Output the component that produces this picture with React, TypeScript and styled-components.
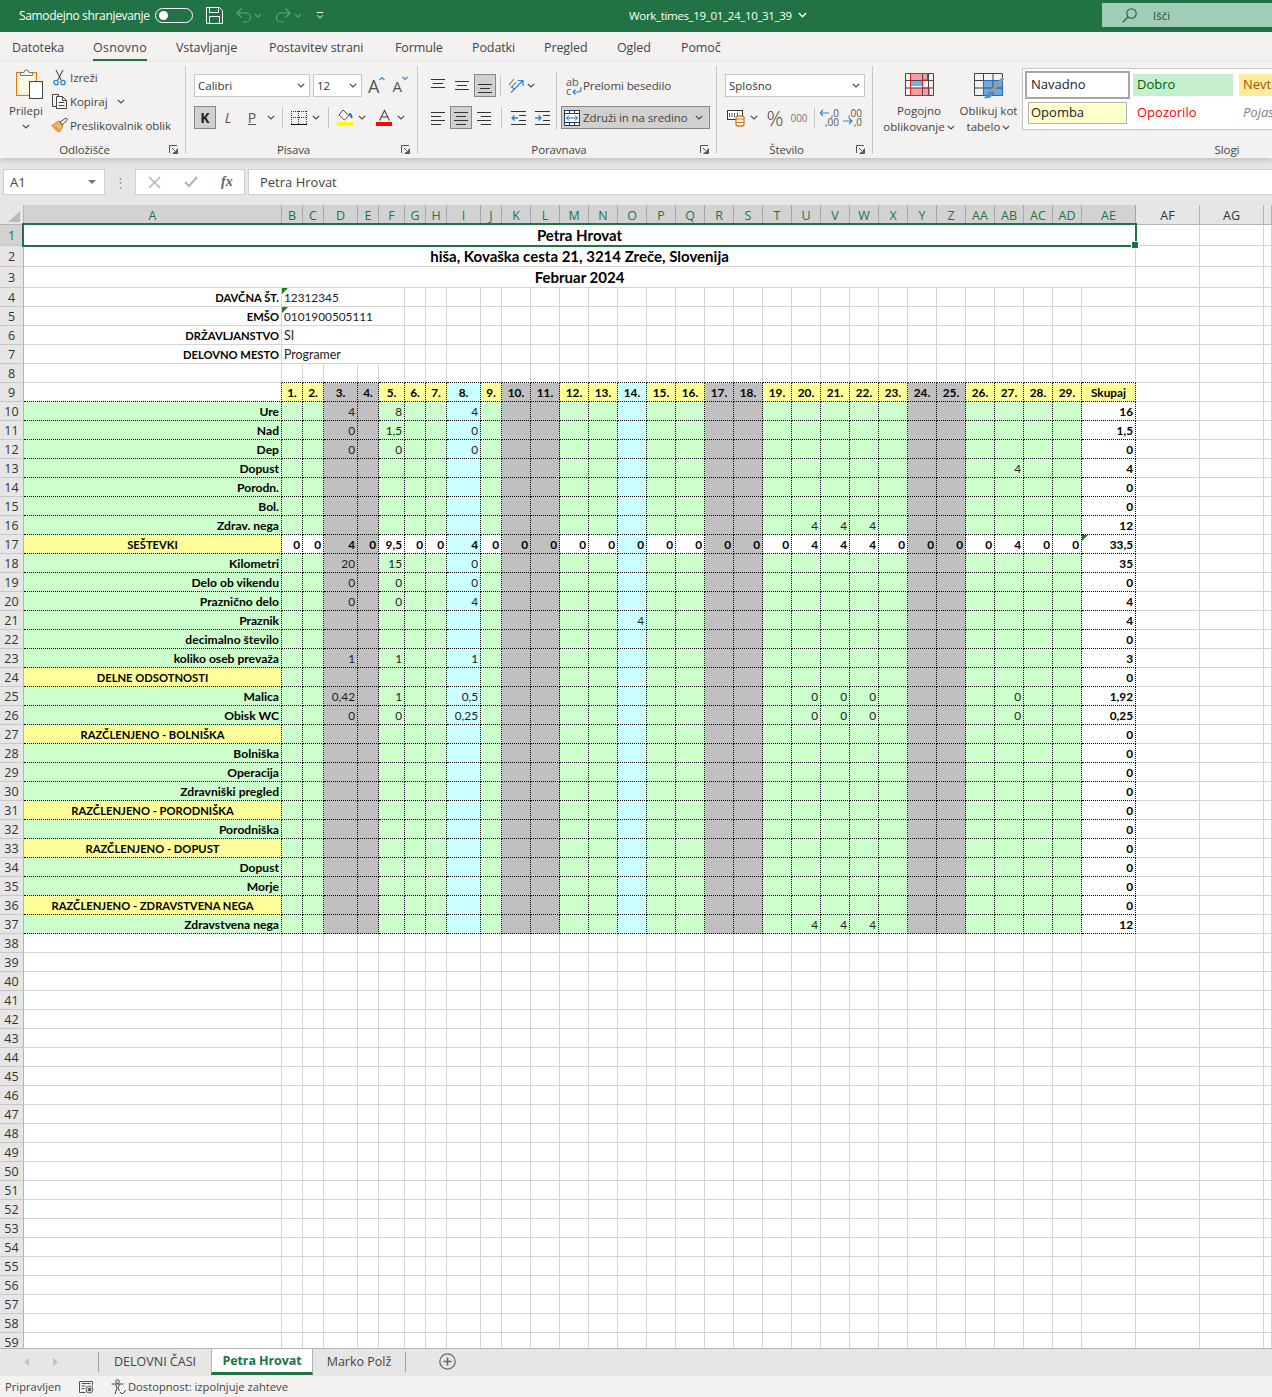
import React from 'react'
import styled, { createGlobalStyle } from 'styled-components'

const UI = `"Open Sans", "Noto Sans", sans-serif`
const SHEET = `"Lato", "Open Sans", sans-serif`
const GREEN = '#217346'
const INK = '#444'

const GlobalStyle = createGlobalStyle`
  html, body { margin: 0; padding: 0; background: #e6e6e6; }
  * { box-sizing: border-box; }
`

/* ---------- data ---------- */

const colNames = [
  'A', 'B', 'C', 'D', 'E', 'F', 'G', 'H', 'I', 'J', 'K', 'L', 'M', 'N', 'O', 'P', 'Q', 'R', 'S', 'T', 'U', 'V', 'W',
  'X', 'Y', 'Z', 'AA', 'AB', 'AC', 'AD', 'AE', 'AF', 'AG', 'AH',
]
const colWidths = [
  258, 21, 21, 34, 21, 26, 21, 21, 34, 21, 29, 29, 29, 29, 29, 29, 29, 29, 29, 29, 29, 29, 29, 29, 29, 29, 29, 29, 29,
  29, 54, 64, 64, 8,
]
const rowHeights = Array.from({ length: 59 }, (_, i) => (i < 3 ? 21 : 19))

const ribbonTabs: [string, number][] = [
  ['Datoteka', 81],
  ['Osnovno', 83],
  ['Vstavljanje', 93],
  ['Postavitev strani', 126],
  ['Formule', 77],
  ['Podatki', 72],
  ['Pregled', 73],
  ['Ogled', 64],
  ['Pomoč', 60],
]

const weekend = [3, 4, 10, 11, 17, 18, 24, 25]
const holiday = [8, 14]
const dayList = Array.from({ length: 29 }, (_, i) => i + 1)

type Row = { label: string; head?: boolean; values?: Record<number, string>; total: string }

const sum: Record<number, string> = {}
dayList.forEach(d => (sum[d] = '0'))
Object.assign(sum, { 3: '4', 5: '9,5', 8: '4', 20: '4', 21: '4', 22: '4', 27: '4' })

const rows: Row[] = [
  { label: 'Ure', values: { 3: '4', 5: '8', 8: '4' }, total: '16' },
  { label: 'Nad', values: { 3: '0', 5: '1,5', 8: '0' }, total: '1,5' },
  { label: 'Dep', values: { 3: '0', 5: '0', 8: '0' }, total: '0' },
  { label: 'Dopust', values: { 27: '4' }, total: '4' },
  { label: 'Porodn.', total: '0' },
  { label: 'Bol.', total: '0' },
  { label: 'Zdrav. nega', values: { 20: '4', 21: '4', 22: '4' }, total: '12' },
  { label: 'SEŠTEVKI', head: true, values: sum, total: '33,5' },
  { label: 'Kilometri', values: { 3: '20', 5: '15', 8: '0' }, total: '35' },
  { label: 'Delo ob vikendu', values: { 3: '0', 5: '0', 8: '0' }, total: '0' },
  { label: 'Praznično delo', values: { 3: '0', 5: '0', 8: '4' }, total: '4' },
  { label: 'Praznik', values: { 14: '4' }, total: '4' },
  { label: 'decimalno število', total: '0' },
  { label: 'koliko oseb prevaža', values: { 3: '1', 5: '1', 8: '1' }, total: '3' },
  { label: 'DELNE ODSOTNOSTI', head: true, total: '0' },
  { label: 'Malica', values: { 3: '0,42', 5: '1', 8: '0,5', 20: '0', 21: '0', 22: '0', 27: '0' }, total: '1,92' },
  { label: 'Obisk WC', values: { 3: '0', 5: '0', 8: '0,25', 20: '0', 21: '0', 22: '0', 27: '0' }, total: '0,25' },
  { label: 'RAZČLENJENO - BOLNIŠKA', head: true, total: '0' },
  { label: 'Bolniška', total: '0' },
  { label: 'Operacija', total: '0' },
  { label: 'Zdravniški pregled', total: '0' },
  { label: 'RAZČLENJENO - PORODNIŠKA', head: true, total: '0' },
  { label: 'Porodniška', total: '0' },
  { label: 'RAZČLENJENO - DOPUST', head: true, total: '0' },
  { label: 'Dopust', total: '0' },
  { label: 'Morje', total: '0' },
  { label: 'RAZČLENJENO - ZDRAVSTVENA NEGA', head: true, total: '0' },
  { label: 'Zdravstvena nega', values: { 20: '4', 21: '4', 22: '4' }, total: '12' },
]

const idRows = [
  { label: 'DAVČNA ŠT.', value: '12312345', flag: true },
  { label: 'EMŠO', value: '0101900505111', flag: true },
  { label: 'DRŽAVLJANSTVO', value: 'SI', flag: false },
  { label: 'DELOVNO MESTO', value: 'Programer', flag: false },
]

const dayFill = (d: number, base: string) => {
  if (weekend.includes(d)) return '#c0c0c0'
  if (holiday.includes(d)) return '#ccffff'
  return base
}

/* ---------- small drawings ---------- */

const Chevron = ({ color = INK }: { color?: string }) => (
  <svg width="8" height="5" viewBox="0 0 8 5" fill="none">
    <path d="M.8.8 4 4 7.2.8" stroke={color} strokeWidth="1.1" />
  </svg>
)

const Launcher = () => (
  <svg width="9" height="9" viewBox="0 0 9 9" fill="none">
    <path d="M.5 8V.5H8M8.5 3.5v5h-5M3 3l4.500 4.500M7.500 4.500v3h-3" stroke="#555" />
  </svg>
)

const PasteIcon = () => (
  <svg width="32" height="32" viewBox="0 0 32 32">
    <rect x="2.5" y="3.5" width="20" height="23" fill="#fbe9c6" stroke="#d9791a" />
    <rect x="4.5" y="5.5" width="16" height="19" fill="#fff6e3" />
    <path d="M6.500 6.500v-3H10a2.500 2.500 0 0 1 5 0h3.500v3z" fill="#f3f2f1" stroke="#777" />
    <rect x="15.5" y="12.5" width="13" height="17" fill="#fff" stroke="#444" />
  </svg>
)

const CutIcon = () => (
  <svg width="13" height="17" viewBox="0 0 13 17" fill="none">
    <path d="M3 1 8.200 11M10 1 4.800 11" stroke="#555" strokeWidth="1.1" />
    <circle cx="3" cy="13.500" r="2.200" stroke="#2b88d8" strokeWidth="1.300" />
    <circle cx="10" cy="13.500" r="2.200" stroke="#2b88d8" strokeWidth="1.300" />
  </svg>
)

const CopyIcon = () => (
  <svg width="18" height="18" viewBox="0 0 18 18" fill="none" stroke="#444">
    <path d="M5.500 14.500h-4v-12h6v2" />
    <path d="M5.500 4.500h6l4 4v8h-10z" fill="#fff" />
    <path d="M11.500 4.500v4h4M7.500 10.500h6M7.500 13.500h6" />
  </svg>
)

const BrushIcon = () => (
  <svg width="18" height="16" viewBox="0 0 18 16">
    <path d="M1 8.500 8 4l4 5-3.500 6C6 14 3 11.500 1 8.500z" fill="#f5b56a" stroke="#d9791a" />
    <path d="M4 9.500 8 13" stroke="#d9791a" />
    <path d="m9 5 6-4 1.500 2L11 8z" fill="#fff" stroke="#444" />
  </svg>
)

const GrowIcon = ({ up }: { up?: boolean }) => (
  <svg width="6" height="5" viewBox="0 0 6 5" fill="none">
    <path d={up ? 'M.5 4 3 1.500 5.500 4' : 'M.5 1 3 3.500 5.500 1'} stroke="#2b88d8" strokeWidth="1.200" />
  </svg>
)

const BorderIcon = () => (
  <svg width="16" height="16" viewBox="0 0 16 16" fill="none" shapeRendering="crispEdges">
    <path d="M0 1.500h16M0 7.500h16M.5 1v13M7.500 1v13M15.500 1v13" stroke="#333" strokeDasharray="1 1" />
    <path d="M0 14.500h16" stroke="#111" strokeWidth="1.500" />
  </svg>
)

const FillIcon = () => (
  <svg width="17" height="17" viewBox="0 0 17 17" fill="none">
    <path d="m6 1 6 5.500-4.500 4.500-5.500-5z" fill="#fff" stroke="#444" />
    <path d="M12 5c2 0 2.500 2 2.500 4" stroke="#106ebe" strokeWidth="2" />
    <rect x="0" y="13" width="16" height="4" fill="#ffff00" />
  </svg>
)

const FontColorIcon = () => (
  <svg width="17" height="17" viewBox="0 0 17 17" fill="none">
    <path d="m3.500 11.500 5-10 5 10M5.300 8h6.400" stroke="#444" strokeWidth="1.100" />
    <rect x="0" y="13" width="16" height="4" fill="#ff0000" />
  </svg>
)

const Lines = ({ set, w = 15, h = 16 }: { set: [number, number, number][]; w?: number; h?: number }) => (
  <svg width={w} height={h} viewBox={`0 0 ${w} ${h}`} fill="none" stroke="#333">
    {set.map(([a, b, y]) => (
      <path key={`${a}-${y}`} d={`M${a} ${y}.5H${b}`} />
    ))}
  </svg>
)

const OrientIcon = () => (
  <svg width="17" height="17" viewBox="0 0 17 17" fill="none">
    <path d="M2 8 7 2M5 10l4-5M3.500 9.500l4 2.500" stroke="#555" />
    <path d="M4 15.500 15.500 4M10.500 3.500H16V9" stroke="#2b88d8" strokeWidth="1.200" />
  </svg>
)

const IndentIcon = ({ flip }: { flip?: boolean }) => (
  <svg width="15" height="14" viewBox="0 0 15 14" fill="none">
    <path d="M0 .5h15M0 13.500h15M8 4.500h7M8 9.500h7" stroke="#333" />
    <path
      d={flip ? 'M0 7h6M3.500 4.500 6 7 3.500 9.500' : 'M7 7H1M3.500 4.500 1 7l2.500 2.500'}
      stroke="#2b88d8"
      strokeWidth="1.300"
    />
  </svg>
)

const WrapArrow = () => (
  <svg width="17" height="20" viewBox="0 0 17 20" fill="none">
    <path d="M15 11v2a3 3 0 0 1-3 3H7M9.500 13.500 7 16l2.500 2.500" stroke="#2b88d8" strokeWidth="1.200" />
  </svg>
)

const MergeIcon = () => (
  <svg width="16" height="16" viewBox="0 0 16 16" fill="none">
    <rect x=".5" y=".5" width="15" height="15" fill="#fff" stroke="#1f3a5f" />
    <path d="M.5 3.500h15M.5 12.500h15M5.500.5v3M10.500.5v3M5.500 12.500v3M10.500 12.500v3" stroke="#1f3a5f" />
    <path d="M2.500 8h11M5 5.500 2.500 8 5 10.500M11 5.500 13.500 8 11 10.500" stroke="#106ebe" />
  </svg>
)

const AccountIcon = () => (
  <svg width="20" height="18" viewBox="0 0 20 18" fill="none">
    <rect x=".5" y="1.500" width="15" height="9" fill="#fff" stroke="#333" />
    <path d="M2.500 4v4M5 4v4M7.500 4v4M10.500 4v4" stroke="#555" />
    <rect x="9" y="7" width="8" height="10" rx="2" fill="#fff" stroke="#d9791a" strokeWidth="1.300" />
    <path d="M9 10h8M9 13.500h8" stroke="#d9791a" />
  </svg>
)

const DecimalArrow = ({ more }: { more?: boolean }) => (
  <svg width="18" height="16" viewBox="0 0 18 16" fill="none">
    <path d={more ? 'M0 4h9M3 1 0 4l3 3' : 'M0 12h9M6 9l3 3-3 3'} stroke="#2b88d8" strokeWidth="1.200" />
  </svg>
)

const CondIcon = () => (
  <svg width="29" height="23" viewBox="0 0 29 23" fill="none">
    <rect x="5" y="1" width="17" height="6" fill="#ff9aa2" />
    <rect x="5" y="7" width="12" height="6" fill="#6fb0e6" />
    <rect x="5" y="15" width="19" height="7" fill="#ff9aa2" />
    <path d="M.5.5h28v22H.5zM.5 7.500h28M.5 15h28M5.500.5v22M17.500.5v22M23.500.5v22" stroke="#444" />
    <path d="M5.500.5h17V7h-5v8H24v7.500H5.500z" stroke="#e02020" />
  </svg>
)

const TableIcon = () => (
  <svg width="30" height="28" viewBox="0 0 30 28" fill="none">
    <rect x="10" y="8" width="18" height="14" fill="#6fa8dc" />
    <path d="M.5.5h28v22H.5zM.5 7.500h28M.5 15h28M9.500.5v22M19 .5v22" stroke="#444" />
    <path d="M9.500 7.500h19v15h-19z" stroke="#1a6fc0" />
    <path d="M29 5 17 19" stroke="#999" strokeWidth="3" />
    <path d="M16 18c-3 1-2 5-7 7 5 1 9 0 10-5z" fill="#4a90d0" />
  </svg>
)

const SaveIcon = () => (
  <svg width="17" height="17" viewBox="0 0 17 17" fill="none" stroke="#fff">
    <path d="M.5.5h13l3 3v13H.5z" />
    <path d="M3.500.5v5h9v-5M3.500 16.500v-7h10v7" />
  </svg>
)

const UndoIcon = ({ flip }: { flip?: boolean }) => (
  <svg width="16" height="16" viewBox="0 0 16 16" fill="none" style={flip ? { transform: 'scaleX(-1)' } : undefined}>
    <path d="M1 6h9a4.500 4.500 0 0 1 0 9H7M5.500 1.500 1 6l4.500 4.500" stroke="#5fa37f" strokeWidth="1.200" />
  </svg>
)

const SearchIcon = () => (
  <svg width="15" height="15" viewBox="0 0 15 15" fill="none" stroke="#1f5c3d" strokeWidth="1.100">
    <circle cx="9.500" cy="5.500" r="4.700" />
    <path d="M6 9 .7 14.300" />
  </svg>
)

const MoreIcon = () => (
  <svg width="8" height="8" viewBox="0 0 8 8" fill="none" stroke="#fff">
    <path d="M1 1.500h6M1.200 4.300 4 7l2.800-2.700" />
  </svg>
)

const AccessIcon = () => (
  <svg width="16" height="16" viewBox="0 0 16 16" fill="none" stroke="#444">
    <circle cx="6.500" cy="2.500" r="1.800" />
    <path d="M.5 5h12M4.500 5.500 6 9l-2 6M8.500 5.500 7 9l1.500 3M9 13l2 2 4-4" />
  </svg>
)

const PageIcon = () => (
  <svg width="15" height="14" viewBox="0 0 15 14" fill="none" stroke="#555">
    <path d="M.5 1.500h13v4M.5 1.500v11h6M2.500 3.500h9M2.500 6h4M2.500 8.500h3" />
    <circle cx="10.500" cy="9.500" r="3.500" />
    <circle cx="10.500" cy="9.500" r="1.500" fill="#555" />
  </svg>
)

/* ---------- page ---------- */

const App = () => (
  <>
    <GlobalStyle />
    <Window>
      <TitleBar>
        <TitleLeft>
          <AutosaveText>Samodejno shranjevanje</AutosaveText>
          <Toggle />
          <TitleSlot $l={13}>
            <SaveIcon />
          </TitleSlot>
          <TitleSlot $l={13}>
            <UndoIcon />
          </TitleSlot>
          <TitleSlot $l={2}>
            <Chevron color="#5fa37f" />
          </TitleSlot>
          <TitleSlot $l={13}>
            <UndoIcon flip />
          </TitleSlot>
          <TitleSlot $l={3}>
            <Chevron color="#5fa37f" />
          </TitleSlot>
          <TitleSlot $l={14}>
            <MoreIcon />
          </TitleSlot>
        </TitleLeft>
        <DocTitle>
          Work_times_19_01_24_10_31_39
          <svg viewBox="0 0 8 5" width="9" height="6">
            <path d="M.8.8 4 4 7.200.8" fill="none" stroke="#fff" strokeWidth="1.300" />
          </svg>
        </DocTitle>
        <SearchBox>
          <SearchIcon />
          <span>Išči</span>
        </SearchBox>
      </TitleBar>

      <TabRow>
        {ribbonTabs.map(([tab, w]) => (
          <TabSlot key={tab} $w={w}>
            <RibbonTab $active={tab === 'Osnovno'}>{tab}</RibbonTab>
          </TabSlot>
        ))}
      </TabRow>

      <Ribbon>
        <Group $w={186}>
          <GroupBody>
            <PasteButton>
              <PasteGlyph>
                <PasteIcon />
              </PasteGlyph>
              <PasteLabel>Prilepi</PasteLabel>
              <Chevron />
            </PasteButton>
            <ClipColumn>
              <ClipItem>
                <ClipSlot $pad={2}>
                  <CutIcon />
                </ClipSlot>
                Izreži
              </ClipItem>
              <ClipItem>
                <ClipSlot $pad={0}>
                  <CopyIcon />
                </ClipSlot>
                Kopiraj
                <ChevronGap>
                  <Chevron />
                </ChevronGap>
              </ClipItem>
              <ClipItem>
                <ClipSlot $pad={0}>
                  <BrushIcon />
                </ClipSlot>
                Preslikovalnik oblik
              </ClipItem>
            </ClipColumn>
          </GroupBody>
          <GroupLabel>
            <LabelText>Odložišče</LabelText>
            <LauncherSlot>
              <Launcher />
            </LauncherSlot>
          </GroupLabel>
        </Group>

        <Group $w={232}>
          <Stack $left={8}>
            <ToolRow>
              <Select $w={116}>
                Calibri
                <Chevron />
              </Select>
              <Spacer $w={3} />
              <Select $w={49}>
                12
                <Chevron />
              </Select>
              <Spacer $w={6} />
              <GrowButton $size={18}>
                A
                <GrowIcon up />
              </GrowButton>
              <Spacer $w={7} />
              <GrowButton $size={15}>
                A
                <GrowIcon />
              </GrowButton>
            </ToolRow>
            <ToolRow>
              <ToolButton $w={22} $on>
                <BoldK>K</BoldK>
              </ToolButton>
              <ToolButton $w={24}>
                <ItalicL>L</ItalicL>
              </ToolButton>
              <ToolButton $w={24}>
                <UnderP>P</UnderP>
              </ToolButton>
              <ToolButton $w={13}>
                <Chevron />
              </ToolButton>
              <VBar $m={5} />
              <ToolButton $w={21}>
                <BorderIcon />
              </ToolButton>
              <ToolButton $w={13}>
                <Chevron />
              </ToolButton>
              <VBar $m={6} />
              <ToolButton $w={20}>
                <FillIcon />
              </ToolButton>
              <ToolButton $w={13}>
                <Chevron />
              </ToolButton>
              <Spacer $w={3} />
              <ToolButton $w={26}>
                <FontColorIcon />
              </ToolButton>
              <ToolButton $w={8}>
                <Chevron />
              </ToolButton>
            </ToolRow>
          </Stack>
          <GroupLabel>
            <LabelText>Pisava</LabelText>
            <LauncherSlot>
              <Launcher />
            </LauncherSlot>
          </GroupLabel>
        </Group>

        <Group $w={299}>
          <GroupBody>
            <Stack $left={8}>
              <ToolRow>
                <ToolButton $w={24}>
                  <Lines set={[[0, 14, 1], [2, 12, 5], [0, 14, 9]]} />
                </ToolButton>
                <ToolButton $w={24}>
                  <Lines set={[[0, 14, 3], [2, 12, 7], [0, 14, 11]]} />
                </ToolButton>
                <ToolButton $w={22} $on>
                  <Lines set={[[0, 14, 6], [2, 12, 10], [0, 14, 14]]} />
                </ToolButton>
                <VBar $m={4} />
                <ToolButton $w={20}>
                  <OrientIcon />
                </ToolButton>
                <ToolButton $w={12}>
                  <Chevron />
                </ToolButton>
              </ToolRow>
              <ToolRow>
                <ToolButton $w={24}>
                  <Lines set={[[0, 14, 2], [0, 10, 6], [0, 14, 10], [0, 10, 14]]} />
                </ToolButton>
                <ToolButton $w={22} $on>
                  <Lines set={[[0, 14, 2], [2, 12, 6], [0, 14, 10], [2, 12, 14]]} />
                </ToolButton>
                <ToolButton $w={25}>
                  <Lines set={[[0, 14, 2], [4, 14, 6], [0, 14, 10], [4, 14, 14]]} />
                </ToolButton>
                <VBar $m={4} />
                <ToolButton $w={24}>
                  <IndentIcon />
                </ToolButton>
                <ToolButton $w={24}>
                  <IndentIcon flip />
                </ToolButton>
              </ToolRow>
            </Stack>
            <WrapColumn>
              <WrapItem>
                <WrapGlyph>
                  <WrapLetters>
                    ab
                    <br />c
                  </WrapLetters>
                  <WrapArrow />
                </WrapGlyph>
                <span>Prelomi besedilo</span>
              </WrapItem>
              <MergeButton>
                <MergeIcon />
                <MergeText>Združi in na sredino</MergeText>
                <Chevron />
              </MergeButton>
            </WrapColumn>
          </GroupBody>
          <GroupLabel>
            <LabelText>Poravnava</LabelText>
            <LauncherSlot>
              <Launcher />
            </LauncherSlot>
          </GroupLabel>
        </Group>

        <Group $w={156}>
          <Stack $left={8}>
            <ToolRow>
              <Select $w={140}>
                Splošno
                <Chevron />
              </Select>
            </ToolRow>
            <ToolRow>
              <ToolButton $w={24}>
                <AccountIcon />
              </ToolButton>
              <ToolButton $w={10}>
                <Chevron />
              </ToolButton>
              <Spacer $w={3} />
              <ToolButton $w={26}>
                <Percent>%</Percent>
              </ToolButton>
              <ToolButton $w={22}>
                <Thousands>000</Thousands>
              </ToolButton>
              <VBar $m={4} />
              <DecimalButton>
                <DecimalArrow more />
                <DecimalDigits $pos="top">,0</DecimalDigits>
                <DecimalDigits $pos="bottom">,00</DecimalDigits>
              </DecimalButton>
              <DecimalButton>
                <DecimalArrow />
                <DecimalDigits $pos="top">,00</DecimalDigits>
                <DecimalDigits $pos="bottom">,0</DecimalDigits>
              </DecimalButton>
            </ToolRow>
          </Stack>
          <GroupLabel>
            <LabelText>Število</LabelText>
            <LauncherSlot>
              <Launcher />
            </LauncherSlot>
          </GroupLabel>
        </Group>

        <Group $w={724} $last>
          <GroupBody>
            <BigButton $w={72} $ml={10}>
              <BigIconSlot>
                <CondIcon />
              </BigIconSlot>
              <span>Pogojno</span>
              <BigLine>
                oblikovanje
                <Chevron />
              </BigLine>
            </BigButton>
            <BigButton $w={67} $ml={0}>
              <BigIconSlot>
                <TableIcon />
              </BigIconSlot>
              <span>Oblikuj kot</span>
              <BigLine>
                tabelo
                <Chevron />
              </BigLine>
            </BigButton>
            <Gallery>
              <NormalChip>Navadno</NormalChip>
              <StyleChip $bg="#c6efce" $fg="#006100">
                Dobro
              </StyleChip>
              <StyleChip $bg="#ffeb9c" $fg="#9c5700">
                Nevtralno
              </StyleChip>
              <NoteChip>Opomba</NoteChip>
              <StyleChip $bg="#fff" $fg="#ff0000">
                Opozorilo
              </StyleChip>
              <StyleChip $bg="#fff" $fg="#7f7f7f" $italic>
                Pojasnilo
              </StyleChip>
            </Gallery>
          </GroupBody>
          <GroupLabel>
            <LabelText>Slogi</LabelText>
            <LauncherSlot />
          </GroupLabel>
        </Group>
      </Ribbon>

      <FormulaBar>
        <NameBox>
          A1
          <Caret />
        </NameBox>
        <GripDots>⋮</GripDots>
        <FormulaButtons>
          <svg width="13" height="13" viewBox="0 0 13 13" fill="none" stroke="#b4b4b4" strokeWidth="1.500">
            <path d="m1 1 11 11M12 1 1 12" />
          </svg>
          <svg width="14" height="12" viewBox="0 0 14 12" fill="none" stroke="#b4b4b4" strokeWidth="2">
            <path d="m1 6 4 4 8-9" />
          </svg>
          <FxText>fx</FxText>
        </FormulaButtons>
        <FormulaInput>Petra Hrovat</FormulaInput>
      </FormulaBar>

      <Sheet>
        <Corner>
          <svg width="12" height="11" viewBox="0 0 12 11">
            <path d="M12 0v11H0z" fill="#b9b9b9" />
          </svg>
        </Corner>
        {colNames.map((name, i) => (
          <ColHead key={name} $selected={i < 31}>
            {i < 33 ? name : ''}
          </ColHead>
        ))}

        {rowHeights.map((_, r) => {
          const n = r + 1
          return (
            <React.Fragment key={n}>
              <RowHead $selected={n === 1}>{n}</RowHead>
              {renderRow(n)}
            </React.Fragment>
          )
        })}
      </Sheet>

      <SheetTabs>
        <NavArrows>
          <svg width="6" height="8" viewBox="0 0 6 8">
            <path d="M5 0v8L0 4z" fill="#c0c0c0" />
          </svg>
          <svg width="6" height="8" viewBox="0 0 6 8">
            <path d="M1 0v8l5-4z" fill="#c0c0c0" />
          </svg>
        </NavArrows>
        <TabDivider />
        <SheetTab $w={112}>DELOVNI ČASI</SheetTab>
        <ActiveSheetTab>Petra Hrovat</ActiveSheetTab>
        <SheetTab $w={92}>Marko Polž</SheetTab>
        <TabDivider />
        <AddSheet>
          <svg width="17" height="17" viewBox="0 0 17 17" fill="none" stroke="#666">
            <circle cx="8.500" cy="8.500" r="7.700" strokeWidth="1.200" />
            <path d="M8.500 4.500v8M4.500 8.500h8" strokeWidth="1.500" />
          </svg>
        </AddSheet>
      </SheetTabs>

      <StatusBar>
        <StatusText>Pripravljen</StatusText>
        <PageIcon />
        <AccessSlot>
          <AccessIcon />
        </AccessSlot>
        <AccessText>Dostopnost: izpolnjuje zahteve</AccessText>
      </StatusBar>
    </Window>
  </>
)

function renderRow(n: number) {
  const blanks = (count: number) => Array.from({ length: count }, (_, i) => <Cell key={`blank${i}`} />)

  if (n <= 3) {
    const text = ['Petra Hrovat', 'hiša, Kovaška cesta 21, 3214 Zreče, Slovenija', 'Februar 2024'][n - 1]
    return (
      <>
        <Cell $span={31} $align="center" $bold $size={15}>
          {text}
          {n === 1 && (
            <Selection>
              <Handle />
            </Selection>
          )}
        </Cell>
        {blanks(3)}
      </>
    )
  }
  if (n <= 7) {
    const item = idRows[n - 4]
    return (
      <>
        <Cell $align="right" $bold $size={11.2}>
          {item.label}
        </Cell>
        <Cell $span={5} $align="left" $size={/\d/.test(item.value) ? undefined : 12.4}>
          {item.flag && <Flag />}
          {item.value}
        </Cell>
        {blanks(28)}
      </>
    )
  }
  if (n === 8) {
    return (
      <>
        <Cell />
        {dayList.map(d => (
          <Cell key={d} $dotBottom />
        ))}
        <Cell $dotBottom />
        {blanks(3)}
      </>
    )
  }
  if (n === 9) {
    return (
      <>
        <Cell $dotted />
        {dayList.map(d => (
          <Cell key={d} $dotted $fill={dayFill(d, '#ffff99')} $align="center" $bold>
            {d}.
          </Cell>
        ))}
        <Cell $dotted $fill="#ffff99" $align="center" $bold>
          Skupaj
        </Cell>
        {blanks(3)}
      </>
    )
  }
  if (n <= 37) {
    const row = rows[n - 10]
    const isSum = row.label === 'SEŠTEVKI'
    return (
      <>
        <Cell
          $dotted
          $fill={row.head ? '#ffff99' : '#ccffcc'}
          $align={row.head ? 'center' : 'right'}
          $bold
          $size={row.head ? 11.2 : 12.1}
        >
          {row.label}
        </Cell>
        {dayList.map(d => (
          <Cell key={d} $dotted $fill={dayFill(d, isSum ? '#ffffff' : '#ccffcc')} $align="right" $bold={isSum}>
            {row.values?.[d]}
          </Cell>
        ))}
        <Cell $dotted $fill="#ffffff" $align="right" $bold>
          {isSum && <Flag />}
          {row.total}
        </Cell>
        {blanks(3)}
      </>
    )
  }
  return blanks(34)
}

const Window = styled.div`
  width: 1272px;
  height: 1397px;
  overflow: hidden;
  display: flex;
  flex-direction: column;
  font-family: ${UI};
  background: #e6e6e6;
`

const TitleBar = styled.header`
  height: 32px;
  flex: none;
  padding-bottom: 2px;
  background: ${GREEN};
  color: #fff;
  display: flex;
  align-items: center;
  font-size: 12px;
`

const TitleLeft = styled.div`
  width: 629px;
  flex: none;
  padding-left: 19px;
  display: flex;
  align-items: center;
`

const AutosaveText = styled.span`
  width: 136px;
  flex: none;
  white-space: nowrap;
  letter-spacing: -0.33px;
`

const Toggle = styled.span`
  position: relative;
  width: 38px;
  height: 15px;
  flex: none;
  border: 1px solid #fff;
  border-radius: 8px;

  &::after {
    content: '';
    position: absolute;
    left: 3px;
    top: 2px;
    width: 9px;
    height: 9px;
    border-radius: 50%;
    background: #fff;
  }
`

const TitleSlot = styled.span<{ $l: number }>`
  display: flex;
  flex: none;
  margin-left: ${({ $l }) => $l}px;
`

const DocTitle = styled.div`
  width: 473px;
  flex: none;
  display: flex;
  align-items: center;
  gap: 6px;
  white-space: nowrap;
  font-size: 11.5px;
  letter-spacing: -0.33px;
`

const SearchBox = styled.div`
  width: 170px;
  height: 24px;
  flex: none;
  background: #a0cdb5;
  color: #1f4f37;
  display: flex;
  align-items: center;
  gap: 16px;
  padding-left: 20px;
  font-size: 11.5px;
`

const TabRow = styled.nav`
  height: 30px;
  flex: none;
  background: #f3f2f1;
  display: flex;
  padding: 3px 0 0 12px;
  font-size: 12.5px;
  color: ${INK};
`

const TabSlot = styled.div<{ $w: number }>`
  width: ${({ $w }) => $w}px;
  flex: none;
`

const RibbonTab = styled.span<{ $active?: boolean }>`
  display: inline-flex;
  height: 26px;
  align-items: center;
  white-space: nowrap;
  letter-spacing: ${({ $active }) => ($active ? '0.25px' : '-0.1px')};
  font-weight: ${({ $active }) => ($active ? 500 : 400)};
  border-bottom: 2px solid ${({ $active }) => ($active ? GREEN : 'transparent')};
`

const Ribbon = styled.section`
  height: 96px;
  flex: none;
  background: #f3f2f1;
  display: flex;
  overflow: hidden;
  box-shadow: 0 2px 6px rgba(0, 0, 0, 0.18);
  position: relative;
  z-index: 1;
  font-size: 11.5px;
  color: ${INK};
`

const Group = styled.div<{ $w: number; $last?: boolean }>`
  width: ${({ $w }) => $w}px;
  flex: none;
  height: 88px;
  margin-top: 4px;
  padding-top: 8px;
  display: flex;
  flex-direction: column;
  border-right: ${({ $last }) => ($last ? 'none' : '1px solid #c8c6c4')};
`

const GroupBody = styled.div`
  display: flex;
  min-height: 0;
`

const GroupLabel = styled.div`
  height: 14px;
  margin-top: auto;
  margin-bottom: -2px;
  flex: none;
  display: flex;
  align-items: center;
`

const LabelText = styled.span`
  flex: 1;
  text-align: center;
  letter-spacing: -0.1px;
`

const LauncherSlot = styled.span`
  width: 16px;
  flex: none;
  display: flex;
`

const PasteButton = styled.div`
  width: 52px;
  flex: none;
  margin-top: -5px;
  display: flex;
  flex-direction: column;
  align-items: center;
`

const PasteGlyph = styled.span`
  display: flex;
  margin-left: 8px;
`

const PasteLabel = styled.span`
  line-height: 16px;
  margin: 2px 0 5px;
  font-size: 11.5px;
`

const ClipColumn = styled.div`
  margin: -9px 0 0 -1px;
  display: flex;
  flex-direction: column;
`

const ClipItem = styled.div`
  height: 24px;
  display: flex;
  align-items: center;
  white-space: nowrap;
  letter-spacing: -0.06px;
`

const ClipSlot = styled.span<{ $pad: number }>`
  width: 19px;
  flex: none;
  padding-left: ${({ $pad }) => $pad}px;
  display: flex;
`

const ChevronGap = styled.span`
  display: flex;
  margin-left: 10px;
`

const Stack = styled.div<{ $left: number }>`
  padding-left: ${({ $left }) => $left}px;
  display: flex;
  flex-direction: column;
  gap: 9px;
  flex: none;
`

const ToolRow = styled.div`
  height: 23px;
  display: flex;
  align-items: center;
`

const Spacer = styled.span<{ $w: number }>`
  width: ${({ $w }) => $w}px;
  flex: none;
`

const Select = styled.div<{ $w: number }>`
  width: ${({ $w }) => $w}px;
  height: 23px;
  flex: none;
  background: #fff;
  border: 1px solid #c8c6c4;
  display: flex;
  align-items: center;
  justify-content: space-between;
  padding: 0 4px 0 3px;
  color: #333;
  font-size: 11.5px;
`

const GrowButton = styled.div<{ $size: number }>`
  display: flex;
  align-items: flex-start;
  font-size: ${({ $size }) => $size}px;
  line-height: 20px;
  height: 20px;
  color: #555;
`

const ToolButton = styled.div<{ $w: number; $on?: boolean }>`
  width: ${({ $w }) => $w}px;
  height: 23px;
  flex: none;
  display: flex;
  align-items: center;
  justify-content: center;
  background: ${({ $on }) => ($on ? '#d2d0ce' : 'transparent')};
  border: ${({ $on }) => ($on ? '1px solid #8a8886' : 'none')};
`

const BoldK = styled.span`
  font-weight: 700;
  font-size: 14px;
  color: #222;
`

const ItalicL = styled.span`
  font-style: italic;
  font-size: 14px;
  color: #555;
`

const UnderP = styled.span`
  font-size: 14px;
  color: #555;
  text-decoration: underline;
`

const VBar = styled.span<{ $m: number }>`
  width: 1px;
  height: 21px;
  flex: none;
  margin: 0 ${({ $m }) => $m}px;
  background: #c8c6c4;
`

const WrapColumn = styled.div`
  margin-left: 2px;
  padding: 2px 0 0 4px;
  height: 58px;
  margin-top: -2px;
  border-left: 1px solid #c8c6c4;
  display: flex;
  flex-direction: column;
  gap: 9px;
`

const WrapItem = styled.div`
  height: 23px;
  display: flex;
  align-items: center;
  white-space: nowrap;
  padding-left: 5px;
  letter-spacing: -0.1px;
`

const WrapGlyph = styled.span`
  position: relative;
  width: 17px;
  height: 20px;
  flex: none;
  display: block;

  svg {
    position: absolute;
    left: 0;
    top: 0;
  }
`

const WrapLetters = styled.span`
  position: absolute;
  left: 0;
  top: 1px;
  font-size: 11px;
  line-height: 9px;
  color: #555;
`

const MergeButton = styled.div`
  width: 149px;
  height: 23px;
  background: #d2d0ce;
  border: 1px solid #8a8886;
  display: flex;
  align-items: center;
  padding: 0 6px 0 2px;
  white-space: nowrap;
`

const MergeText = styled.span`
  flex: 1;
  margin-left: 3px;
  letter-spacing: -0.1px;
`

const Percent = styled.span`
  font-size: 21px;
  font-weight: 300;
  color: #444;
`

const Thousands = styled.span`
  font-size: 10px;
  color: #777;
`

const DecimalButton = styled.div`
  position: relative;
  width: 23px;
  height: 23px;
  flex: none;

  svg {
    position: absolute;
    left: 1px;
    top: 3px;
  }
`

const DecimalDigits = styled.span<{ $pos: 'top' | 'bottom' }>`
  position: absolute;
  right: 3px;
  top: ${({ $pos }) => ($pos === 'top' ? 2 : 11)}px;
  font-size: 10px;
  line-height: 10px;
  color: #555;
`

const BigButton = styled.div<{ $w: number; $ml: number }>`
  width: ${({ $w }) => $w}px;
  margin-left: ${({ $ml }) => $ml}px;
  flex: none;
  margin-top: -1px;
  display: flex;
  flex-direction: column;
  align-items: center;
  line-height: 16px;
  white-space: nowrap;
`

const BigIconSlot = styled.span`
  height: 30px;
  display: flex;
`

const BigLine = styled.span`
  display: flex;
  align-items: center;
  gap: 2px;
`

const Gallery = styled.div`
  width: 251px;
  height: 62px;
  flex: none;
  margin-top: -6px;
  padding: 2px 0 0 2px;
  background: #fff;
  border: 1px solid #c8c6c4;
  display: grid;
  grid-template-columns: 105px 106px 106px;
  grid-auto-rows: 28px;
  font-size: 13px;
  overflow: hidden;
`

const NormalChip = styled.div`
  border: 2px solid #a6a6a6;
  padding: 0 0 2px 4px;
  display: flex;
  align-items: center;
  color: #222;
`

const StyleChip = styled.div<{ $bg: string; $fg: string; $italic?: boolean }>`
  margin: 3px;
  padding: 0 0 2px 4px;
  display: flex;
  align-items: center;
  background: ${({ $bg }) => $bg};
  color: ${({ $fg }) => $fg};
  font-style: ${({ $italic }) => ($italic ? 'italic' : 'normal')};
`

const NoteChip = styled.div`
  margin: 3px;
  padding: 0 0 2px 2px;
  display: flex;
  align-items: center;
  background: #ffffcc;
  border: 1px solid #b2b2b2;
  color: #222;
`

const FormulaBar = styled.div`
  height: 47px;
  flex: none;
  padding: 11px 0 10px 3px;
  display: flex;
  font-size: 13px;
  color: ${INK};
`

const NameBox = styled.div`
  width: 102px;
  background: #fff;
  border: 1px solid #d0d0d0;
  display: flex;
  align-items: center;
  justify-content: space-between;
  padding: 0 8px 0 6px;
`

const Caret = styled.span`
  width: 0;
  height: 0;
  border-left: 4px solid transparent;
  border-right: 4px solid transparent;
  border-top: 4px solid #777;
`

const GripDots = styled.span`
  width: 30px;
  text-align: center;
  line-height: 26px;
  color: #999;
`

const FormulaButtons = styled.div`
  width: 110px;
  background: #fff;
  border: 1px solid #d0d0d0;
  display: flex;
  align-items: center;
  padding-left: 12px;
  gap: 23px;
`

const FxText = styled.span`
  font-family: 'Liberation Serif', serif;
  font-style: italic;
  font-weight: 700;
  font-size: 14px;
  color: #666;
`

const FormulaInput = styled.div`
  margin-left: 3px;
  flex: 1;
  background: #fff;
  border: 1px solid #d0d0d0;
  border-right: none;
  display: flex;
  align-items: center;
  padding-left: 11px;
`

const Sheet = styled.main`
  height: 1143px;
  flex: none;
  overflow: hidden;
  display: grid;
  grid-template-columns: 24px ${colWidths.map(w => `${w}px`).join(' ')};
  grid-template-rows: 20px ${rowHeights.map(h => `${h}px`).join(' ')};
  background: #fff;
  font-family: ${SHEET};
  font-size: 11.8px;
  color: #222;
`

const Corner = styled.div`
  background: #e6e6e6;
  border-right: 1px solid #b4b4b4;
  border-bottom: 1px solid #b4b4b4;
  display: flex;
  align-items: flex-end;
  justify-content: flex-end;
  padding: 0 3px 2px 0;
`

const ColHead = styled.div<{ $selected?: boolean }>`
  background: ${({ $selected }) => ($selected ? '#d2d2d2' : '#e6e6e6')};
  color: ${({ $selected }) => ($selected ? GREEN : '#333')};
  border-right: 1px solid ${({ $selected }) => ($selected ? '#a8a8a8' : '#b4b4b4')};
  border-bottom: 1px solid #b4b4b4;
  padding-top: 2px;
  font-family: ${UI};
  font-size: 12.5px;
  display: flex;
  align-items: center;
  justify-content: center;
  overflow: hidden;
`

const RowHead = styled.div<{ $selected?: boolean }>`
  background: ${({ $selected }) => ($selected ? '#d2d2d2' : '#e6e6e6')};
  color: ${({ $selected }) => ($selected ? GREEN : '#333')};
  border-right: 1px solid #b4b4b4;
  border-bottom: 1px solid #c8c8c8;
  font-family: ${UI};
  font-size: 12.5px;
  display: flex;
  align-items: center;
  justify-content: center;
  overflow: hidden;
`

const justify = { left: 'flex-start', center: 'center', right: 'flex-end' }

const Cell = styled.div<{
  $span?: number
  $align?: 'left' | 'center' | 'right'
  $bold?: boolean
  $fill?: string
  $dotted?: boolean
  $dotBottom?: boolean
  $size?: number
}>`
  position: relative;
  grid-column: span ${({ $span }) => $span ?? 1};
  display: flex;
  align-items: center;
  justify-content: ${({ $align }) => justify[$align ?? 'left']};
  padding: 0 ${({ $align }) => ($align === 'left' ? '0 0 2px' : '2px')};
  white-space: nowrap;
  background: ${({ $fill }) => $fill ?? '#fff'};
  font-weight: ${({ $bold }) => ($bold ? 700 : 400)};
  font-size: ${({ $size }) => ($size ? `${$size}px` : 'inherit')};
  color: ${({ $bold }) => ($bold ? '#000' : '#222')};
  border-right: 1px ${({ $dotted }) => ($dotted ? 'dotted #000' : 'solid #d4d4d4')};
  border-bottom: 1px ${({ $dotted, $dotBottom }) => ($dotted || $dotBottom ? 'dotted #000' : 'solid #d4d4d4')};
`

const Flag = styled.span`
  position: absolute;
  left: 0;
  top: 0;
  width: 0;
  height: 0;
  border-top: 6px solid #1e7b1e;
  border-right: 6px solid transparent;
`

const Selection = styled.div`
  position: absolute;
  left: -2px;
  right: -2px;
  top: -2px;
  bottom: -2px;
  border: 2px solid ${GREEN};
  z-index: 2;
`

const Handle = styled.span`
  position: absolute;
  right: -3px;
  bottom: -3px;
  width: 6px;
  height: 6px;
  background: ${GREEN};
  outline: 1px solid #fff;
`

const SheetTabs = styled.div`
  height: 28px;
  flex: none;
  background: #e6e6e6;
  border-top: 1px solid #b4b4b4;
  padding-bottom: 2px;
  display: flex;
  align-items: center;
  font-size: 12.5px;
  color: ${INK};
`

const NavArrows = styled.div`
  width: 98px;
  padding-left: 24px;
  display: flex;
  gap: 22px;
`

const TabDivider = styled.span`
  width: 1px;
  height: 20px;
  background: #a0a0a0;
`

const SheetTab = styled.div<{ $w: number }>`
  width: ${({ $w }) => $w}px;
  text-align: center;
  white-space: nowrap;
`

const ActiveSheetTab = styled.div`
  width: 102px;
  height: 26px;
  margin-top: 1px;
  background: #fff;
  border-bottom: 3px solid ${GREEN};
  border-left: 1px solid #b4b4b4;
  border-right: 1px solid #b4b4b4;
  color: ${GREEN};
  font-weight: 700;
  letter-spacing: -0.1px;
  display: flex;
  align-items: center;
  justify-content: center;
  white-space: nowrap;
`

const AddSheet = styled.div`
  margin-left: 33px;
  display: flex;
`

const StatusBar = styled.footer`
  height: 21px;
  flex: none;
  background: #f3f2f1;
  display: flex;
  align-items: center;
  padding-left: 5px;
  font-size: 11.2px;
  color: ${INK};
`

const StatusText = styled.span`
  width: 74px;
  flex: none;
`

const AccessSlot = styled.span`
  display: flex;
  margin-left: 17px;
`

const AccessText = styled.span`
  margin-left: 1px;
`

export default App
